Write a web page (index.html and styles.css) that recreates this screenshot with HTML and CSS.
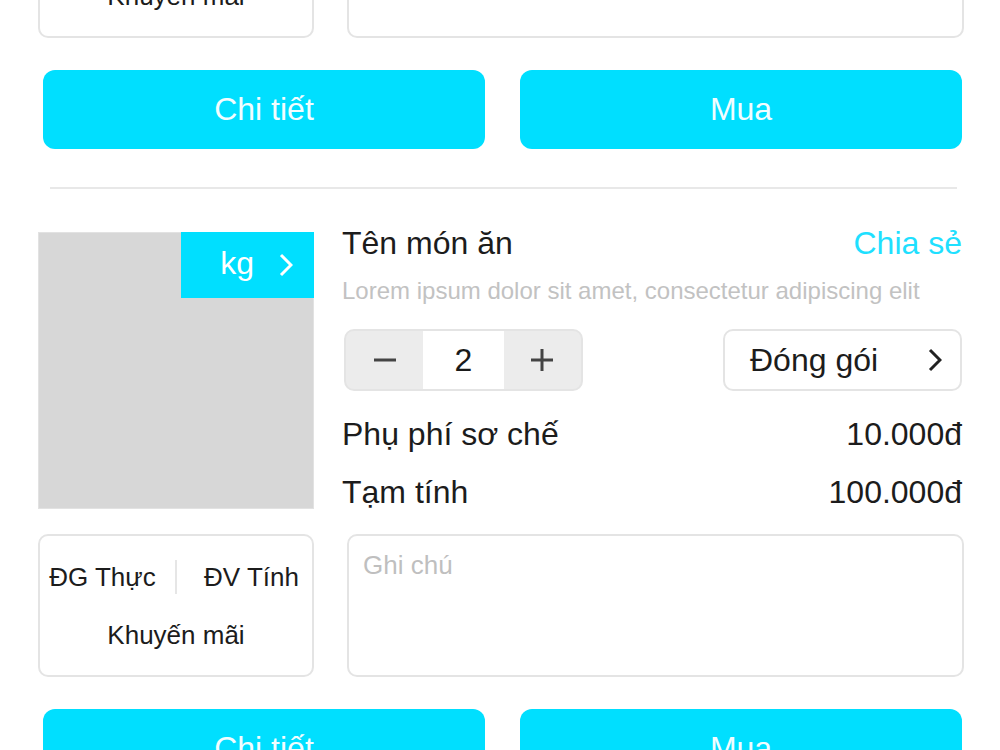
FILE: index.html
```html
<!DOCTYPE html>
<html lang="vi">
<head>
<meta charset="utf-8">
<title>Món ăn</title>
<link rel="stylesheet" href="styles.css">
</head>
<body>
<main class="list">
  <section class="item">
    <div class="item-main">
      <div class="photo">
        <div class="unit-badge"><span>kg</span>
          <svg class="chev" viewBox="0 0 14 24" width="14" height="24"><polyline points="2,2 12,12 2,22" fill="none" stroke="#ffffff" stroke-width="3"/></svg>
        </div>
      </div>
      <div class="info">
        <div class="title-row"><span class="title">Tên món ăn</span><span class="share">Chia sẻ</span></div>
        <p class="desc">Lorem ipsum dolor sit amet, consectetur adipiscing elit</p>
        <div class="controls">
          <div class="stepper">
            <span class="step-btn"><svg viewBox="0 0 24 24" width="24" height="24"><line x1="1" y1="12" x2="23" y2="12" stroke="#444" stroke-width="3"/></svg></span>
            <span class="step-val">2</span>
            <span class="step-btn"><svg viewBox="0 0 24 24" width="24" height="24"><line x1="1" y1="12" x2="23" y2="12" stroke="#444" stroke-width="3"/><line x1="12" y1="1" x2="12" y2="23" stroke="#444" stroke-width="3"/></svg></span>
          </div>
          <div class="pack"><span>Đóng gói</span>
            <svg class="chev" viewBox="0 0 14 24" width="14" height="24"><polyline points="2,2 12,12 2,22" fill="none" stroke="#222" stroke-width="3"/></svg>
          </div>
        </div>
        <div class="line line-fee"><span>Phụ phí sơ chế</span><span>10.000đ</span></div>
        <div class="line line-sub"><span>Tạm tính</span><span>100.000đ</span></div>
      </div>
    </div>
    <div class="item-extra">
      <div class="meta">
        <div class="meta-top"><span>ĐG Thực</span><span class="vsep"></span><span>ĐV Tính</span></div>
        <div class="meta-bottom">Khuyến mãi</div>
      </div>
      <div class="note">Ghi chú</div>
    </div>
    <div class="actions">
      <button class="btn">Chi tiết</button>
      <button class="btn">Mua</button>
    </div>
  </section>
  <hr class="divider">
  <section class="item">
    <div class="item-main">
      <div class="photo">
        <div class="unit-badge"><span>kg</span>
          <svg class="chev" viewBox="0 0 14 24" width="14" height="24"><polyline points="2,2 12,12 2,22" fill="none" stroke="#ffffff" stroke-width="3"/></svg>
        </div>
      </div>
      <div class="info">
        <div class="title-row"><span class="title">Tên món ăn</span><span class="share">Chia sẻ</span></div>
        <p class="desc">Lorem ipsum dolor sit amet, consectetur adipiscing elit</p>
        <div class="controls">
          <div class="stepper">
            <span class="step-btn"><svg viewBox="0 0 24 24" width="24" height="24"><line x1="1" y1="12" x2="23" y2="12" stroke="#444" stroke-width="3"/></svg></span>
            <span class="step-val">2</span>
            <span class="step-btn"><svg viewBox="0 0 24 24" width="24" height="24"><line x1="1" y1="12" x2="23" y2="12" stroke="#444" stroke-width="3"/><line x1="12" y1="1" x2="12" y2="23" stroke="#444" stroke-width="3"/></svg></span>
          </div>
          <div class="pack"><span>Đóng gói</span>
            <svg class="chev" viewBox="0 0 14 24" width="14" height="24"><polyline points="2,2 12,12 2,22" fill="none" stroke="#222" stroke-width="3"/></svg>
          </div>
        </div>
        <div class="line line-fee"><span>Phụ phí sơ chế</span><span>10.000đ</span></div>
        <div class="line line-sub"><span>Tạm tính</span><span>100.000đ</span></div>
      </div>
    </div>
    <div class="item-extra">
      <div class="meta">
        <div class="meta-top"><span>ĐG Thực</span><span class="vsep"></span><span>ĐV Tính</span></div>
        <div class="meta-bottom">Khuyến mãi</div>
      </div>
      <div class="note">Ghi chú</div>
    </div>
    <div class="actions">
      <button class="btn">Chi tiết</button>
      <button class="btn">Mua</button>
    </div>
  </section>
</main>
</body>
</html>
```

FILE: styles.css
```css
* { box-sizing: border-box; }
html, body { margin: 0; padding: 0; background: #ffffff; overflow: hidden; }
body {
  font-family: "Liberation Sans", Arial, sans-serif;
  color: #1c1c1c;
  width: 1000px;
  height: 750px;
}
.list { margin-top: -407px; }

.item-main {
  display: flex;
  align-items: flex-start;
  height: 277px;
  padding: 0 38px;
  gap: 28px;
}
.photo {
  flex: 0 0 276px;
  height: 277px;
  background: #d7d7d7;
  border: 1px solid #e2e2e2;
  display: flex;
  justify-content: flex-end;
  align-items: flex-start;
}
.unit-badge {
  width: 133px;
  height: 66px;
  margin: -1px -1px 0 0;
  background: #00dfff;
  color: #ffffff;
  font-size: 32px;
  display: flex;
  align-items: center;
  justify-content: flex-end;
  gap: 25px;
  padding-right: 21px;
}
.unit-badge span { line-height: 37px; margin-top: -4px; }
.chev { display: block; }

.info {
  flex: 1;
  margin-top: -7px;
  display: flex;
  flex-direction: column;
}
.title-row {
  display: flex;
  justify-content: space-between;
  font-size: 32px;
  line-height: 37px;
}
.share { color: #1fe0ff; }
.desc {
  margin: 15px 0 0;
  font-size: 24px;
  line-height: 28px;
  color: #c2c2c2;
}
.controls {
  margin-top: 24px;
  display: flex;
  justify-content: space-between;
  height: 62px;
}
.stepper {
  margin-left: 2px;
  width: 239px;
  height: 62px;
  display: flex;
  background: #ececec;
  border: 2px solid #e4e4e4;
  border-radius: 10px;
  overflow: hidden;
}
.step-btn {
  width: 78px;
  display: flex;
  align-items: center;
  justify-content: center;
}
.step-val {
  width: 82px;
  background: #ffffff;
  display: flex;
  align-items: center;
  justify-content: center;
  font-size: 32px;
  color: #1a1a1a;
}
.pack {
  width: 239px;
  height: 62px;
  border: 2px solid #e4e4e4;
  border-radius: 10px;
  display: flex;
  align-items: center;
  justify-content: space-between;
  padding: 0 18px 0 25px;
  font-size: 32px;
}
.line {
  display: flex;
  justify-content: space-between;
  font-size: 32px;
  line-height: 37px;
}
.line-fee { margin-top: 25px; }
.line-sub { margin-top: 21px; }

.item-extra {
  display: flex;
  gap: 33px;
  margin-top: 25px;
  padding: 0 36px 0 38px;
  height: 143px;
}
.meta {
  flex: 0 0 276px;
  border: 2px solid #e4e4e4;
  border-radius: 10px;
  font-size: 26px;
  display: flex;
  flex-direction: column;
  align-items: center;
}
.meta-top {
  display: grid;
  grid-template-columns: 1fr 2px 1fr;
  align-items: center;
  width: 100%;
  margin-top: 24px;
  height: 34px;
}
.meta-top span:first-child { text-align: center; padding-left: 0; margin-right: 10px; }
.meta-top span:last-child { text-align: center; margin-left: 14px; }
.vsep { width: 2px; height: 34px; background: #e6e6e6; }
.meta-bottom { margin-top: 26px; line-height: 30px; }
.note {
  flex: 1;
  border: 2px solid #e4e4e4;
  border-radius: 10px;
  padding: 14px 14px;
  font-size: 26px;
  line-height: 30px;
  color: #bfbfbf;
}

.actions {
  display: flex;
  gap: 35px;
  margin-top: 32px;
  padding: 0 38px 0 43px;
}
.btn {
  flex: 1;
  height: 79px;
  border: none;
  border-radius: 12px;
  background: #00dfff;
  color: #f2fdff;
  font-family: "Liberation Sans", Arial, sans-serif;
  font-size: 32px;
  padding: 0;
}
.divider {
  border: none;
  height: 2px;
  background: #e8e8e8;
  margin: 38px 43px 43px 50px;
}
```
